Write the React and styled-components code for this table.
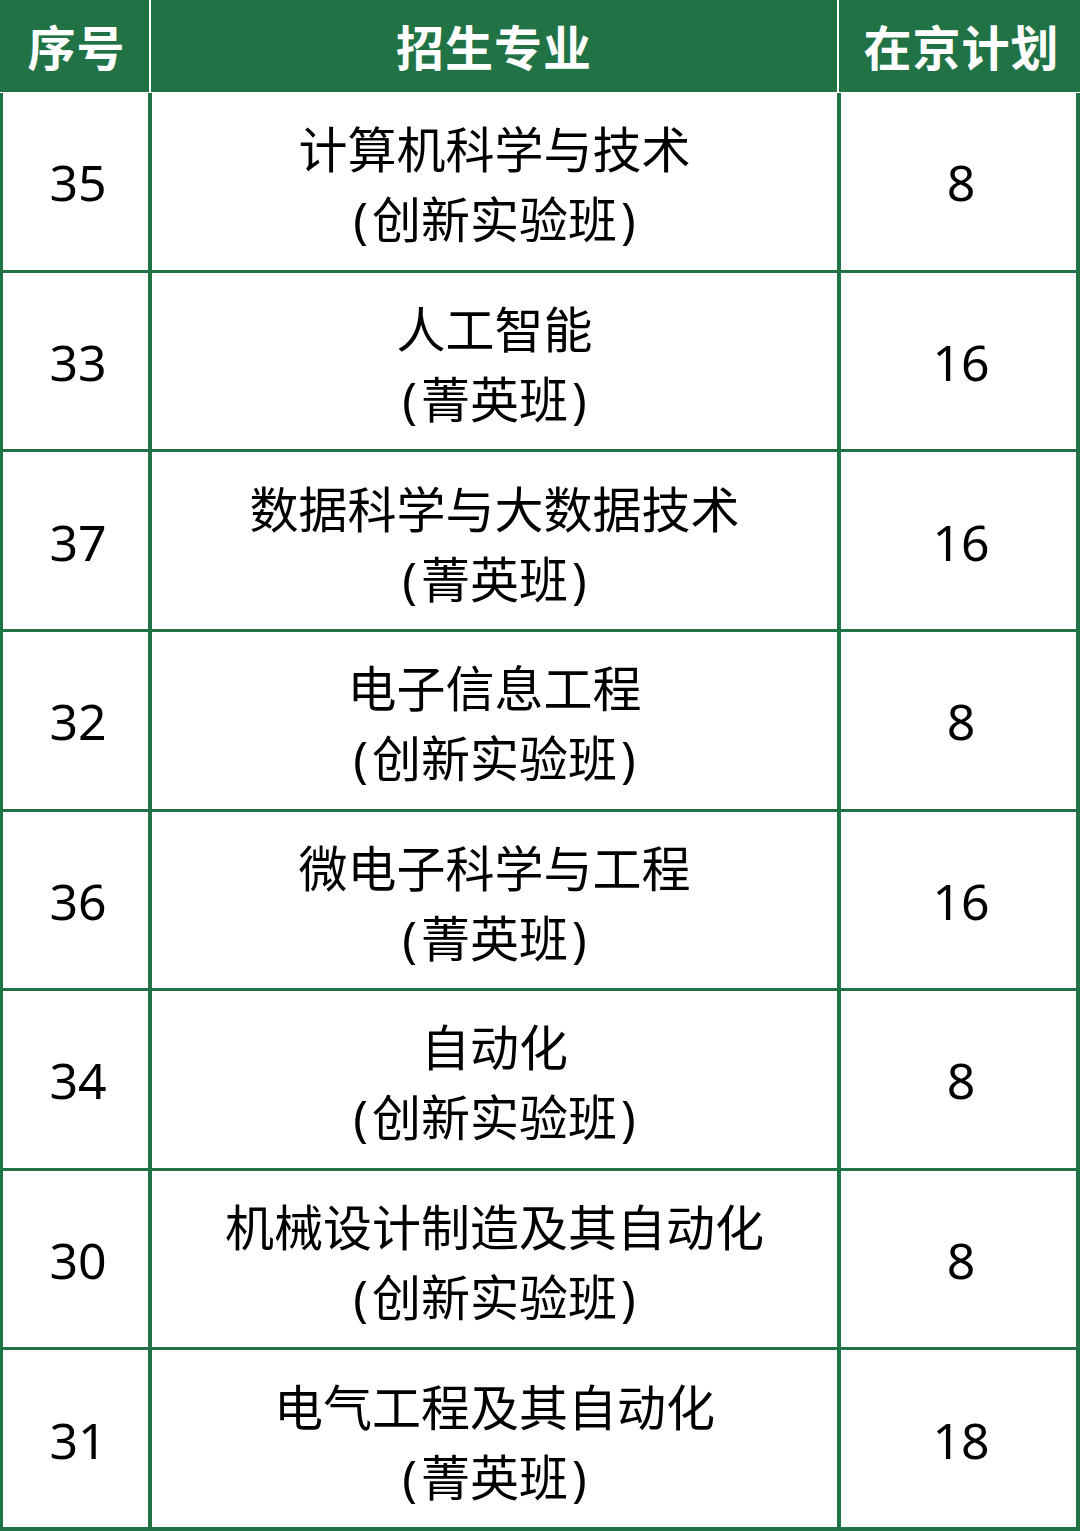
import React from "react";
import styled, { createGlobalStyle } from "styled-components";

const GlobalStyle = createGlobalStyle`
  html, body {
    margin: 0;
    padding: 0;
    background: #fff;
  }
  body {
    font-family: "Noto Sans", "Noto Sans CJK SC", sans-serif;
  }
`;

const GREEN = "#217346";

const Page = styled.div`
  width: 1080px;
  height: 1531px;
  display: flex;
  flex-direction: column;
  background: #fff;
`;

const Header = styled.div`
  height: 92px;
  display: grid;
  grid-template-columns: 149px 686px 1fr;
  column-gap: 2px;
  background: #fff;
  margin-bottom: 1px;
`;

const HeadCell = styled.div`
  background: ${GREEN};
  color: #fff;
  display: flex;
  align-items: center;
  justify-content: center;
  font-family: "Noto Sans CJK SC", sans-serif;
  font-weight: 700;
  font-size: 48px;
  letter-spacing: 1px;
  padding-bottom: 2px;
  padding-left: ${(p) => (p.$shift ? "4px" : "0")};
`;

const Body = styled.div`
  flex: 1;
  display: grid;
  grid-template-columns: 145px 685px 1fr;
  grid-auto-rows: 1fr;
  column-gap: 4px;
  row-gap: 3px;
  padding: 0 4px 4px 3px;
  background: ${GREEN};
`;

const Cell = styled.div`
  background: #fff;
  color: #000;
  display: flex;
  flex-direction: column;
  align-items: center;
  justify-content: center;
  text-align: center;
  font-size: ${(p) => (p.$num ? "50px" : "49px")};
  line-height: 70px;
  padding-top: ${(p) => (p.$num ? "2px" : "6px")};
  padding-left: ${(p) => (p.$num ? "5px" : "0")};
`;

const Paren = styled.span`
  margin: 0 4px;
`;

const rows = [
  ["35", "计算机科学与技术", "创新实验班", "8"],
  ["33", "人工智能", "菁英班", "16"],
  ["37", "数据科学与大数据技术", "菁英班", "16"],
  ["32", "电子信息工程", "创新实验班", "8"],
  ["36", "微电子科学与工程", "菁英班", "16"],
  ["34", "自动化", "创新实验班", "8"],
  ["30", "机械设计制造及其自动化", "创新实验班", "8"],
  ["31", "电气工程及其自动化", "菁英班", "18"],
];

export default function App() {
  return (
    <>
      <GlobalStyle />
      <Page>
        <Header>
          <HeadCell $shift>序号</HeadCell>
          <HeadCell>招生专业</HeadCell>
          <HeadCell $shift>在京计划</HeadCell>
        </Header>
        <Body>
          {rows.map(([no, major, cls, plan]) => (
            <React.Fragment key={no}>
              <Cell $num>{no}</Cell>
              <Cell>
                <span>{major}</span>
                <span>
                  <Paren>(</Paren>
                  {cls}
                  <Paren>)</Paren>
                </span>
              </Cell>
              <Cell $num>{plan}</Cell>
            </React.Fragment>
          ))}
        </Body>
      </Page>
    </>
  );
}
